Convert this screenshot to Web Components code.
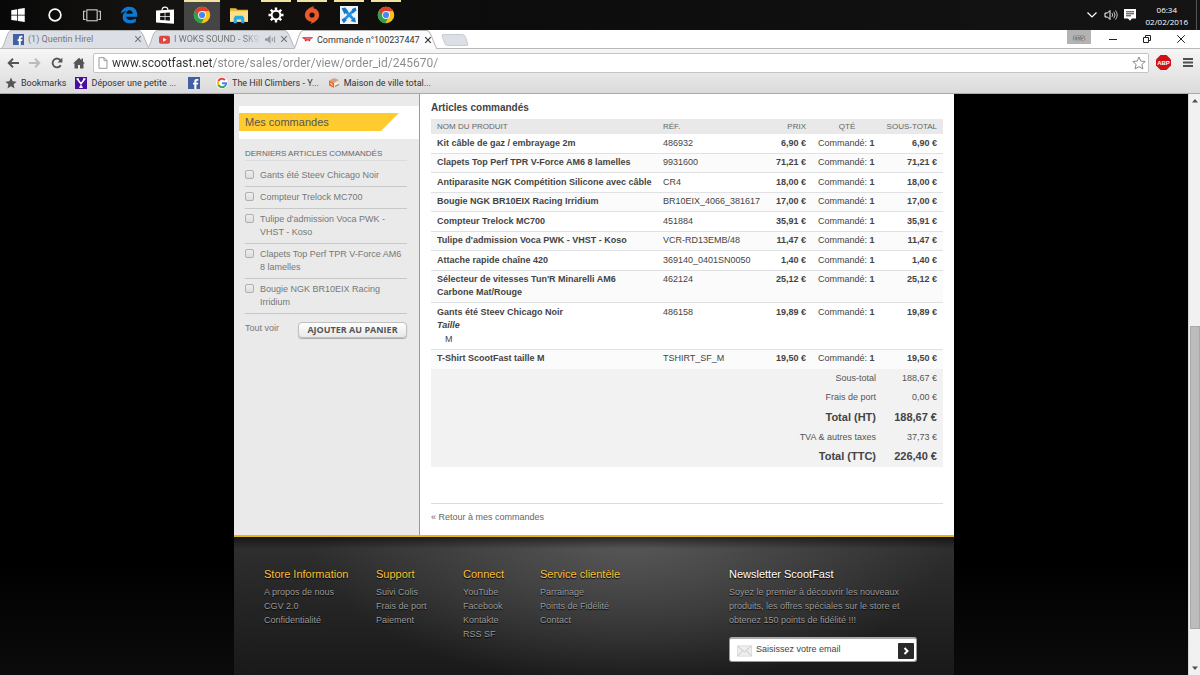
<!DOCTYPE html>
<html lang="fr">
<head>
<meta charset="utf-8">
<title>Commande n°100237447</title>
<style>
  html, body { margin: 0; height: 100%; }
  body { overflow: hidden; background: #000; font-family: "Liberation Sans", Arial, sans-serif; }
</style>
</head>
<body>
<desk-top></desk-top>
<script>
const define = (name, css, html, setup) => {
  const template = document.createElement('template');
  template.innerHTML = `<style>*{box-sizing:border-box}:host{box-sizing:border-box}${css}</style>${html}`;
  customElements.define(name, class extends HTMLElement {
    constructor() {
      super();
      this.attachShadow({ mode: 'open' }).append(template.content.cloneNode(true));
    }
    connectedCallback() { if (setup) setup(this, this.shadowRoot); }
  });
};

const chrome = `<circle cx="12" cy="12" r="11" fill="#fbc116"/>
  <path d="M2.500 6.500A11 11 0 0 0 11 23l5-8.500-4-2.500z" fill="#2da150"/>
  <path d="M2.500 6.500 8 15l4-8.500z" fill="#2da150"/><path d="M2.500 6.500A11 11 0 0 1 21.500 6.500H12L6.500 11z" fill="#e23e30"/>
  <circle cx="12" cy="12" r="5.300" fill="#f4f4f4"/><circle cx="12" cy="12" r="4.100" fill="#4a86ef"/>`;

/* name: [viewBox, shapes] */
const ICONS = {
  windows: ['0 0 24 24', '<path fill="#fff" d="M3 5.500 11 4.300v7.200H3zM12 4.100 21 2.800v8.700H12zM3 12.500h8v7.200L3 18.500zM12 12.500H21V21.200l-9-1.300z"/>'],
  cortana: ['0 0 24 24', '<circle cx="12" cy="12" r="7.800" fill="none" stroke="#fff" stroke-width="2.300"/>'],
  taskview: ['0 0 28 24', '<g fill="none" stroke="#ddd" stroke-width="1.600"><rect x="6" y="4" width="16" height="17"/><path d="M4 6H1v13h3M24 6h3v13h-3"/></g>'],
  edge: ['0 0 24 24', '<path fill="#0f78d4" d="M1 10.500C2 4.500 6.500 1 12.300 1 19 1 23 5.700 23 12v2.300H8.200c.3 3 2.700 4.300 5.800 4.300 2.700 0 5-.7 7-1.900v4.700c-2.200 1.200-4.800 1.700-7.500 1.700C7.300 23.100 3.600 19.700 3.600 14.500c0-3.600 2-6.500 5.400-8C5.800 6.700 3 8.200 1 10.500zM8.300 10.300h8.600c0-2.800-1.500-4.500-4.100-4.500-2.500 0-4.100 1.800-4.500 4.500z"/>'],
  store: ['0 0 24 24', '<path fill="none" stroke="#fff" stroke-width="1.500" d="M8 6c0-6 8-6 8 0"/><path fill="#fff" d="M0 6l24-1.500v19L0 22z"/><path fill="#151515" d="M5.500 9.500l6-.4v4.200h-6zM12.500 9l6-.5v4.800h-6zM5.500 14.300h6v4.600l-6-.4zM12.500 14.300h6v5.200l-6-.5z"/>'],
  chrome: ['0 0 24 24', chrome],
  folder: ['0 0 24 24', '<path fill="#e9b93d" d="M0 3h8l2 2h14v16H0z"/><path fill="#fbe08a" d="M0 7h24v14H0z"/><path fill="#27a9e8" d="M5 23v-7l2-3h10l2 3v7h-4v-5H9v5z"/>'],
  gear: ['0 0 24 24', '<circle cx="12" cy="12" r="5.800" fill="none" stroke="#fff" stroke-width="2.600"/><g stroke="#fff" stroke-width="3.200"><path d="M12 2v4M12 18v4M2 12h4M18 12h4M5 5l2.600 2.600M16.400 16.400 19 19M5 19l2.600-2.600M16.400 7.600 19 5"/></g>'],
  origin: ['0 0 24 24', '<path fill="#e8592b" d="M15 0c-1 1.500-1.300 2.500-1.300 3.100C18.500 3.500 21.500 7.500 21.500 12c0 5.500-5 9.500-11.500 12 1-1.500 1.300-2.300 1.300-3.100C6 20.500 2.500 16.700 2.500 12 2.500 6 8 2 15 0z"/><circle cx="12" cy="12" r="3.400" fill="#15100e"/>'],
  tools: ['0 0 24 24', '<rect width="24" height="24" fill="#eef4f8"/><path d="M4 20 20 4M6 5l13 14" stroke="#2492de" stroke-width="3.600"/><path d="M2 3l5-1 4 5-5 4zM14 20l7 2-1-7zM16 4l5-2 1 4-5 4zM2 18l4-2 3 3-4 4z" fill="#1878c8"/>'],
  chevron: ['0 0 12 12', '<path d="M1.500 3.500 6 8l4.500-4.500" fill="none" stroke="#fff" stroke-width="1.200"/>'],
  speaker: ['0 0 14 12', '<path d="M1 4h2.500L6 1.500v9L3.500 8H1z" fill="none" stroke="#fff"/><path d="M8 4.200q1.500 1.800 0 3.600M9.800 2.800q2.400 3.200 0 6.400M11.500 1.500q3.400 4.500 0 9" fill="none" stroke="#ddd" stroke-width=".9"/>'],
  note: ['0 0 12 12', '<path d="M0 0h12v9.500H8L6 11.700 4 9.500H0z" fill="#fff"/><path d="M2 2.800h8M2 4.800h8M2 6.800h5" stroke="#222" stroke-width=".9"/>'],
  facebook: ['0 0 12 12', '<rect width="12" height="12" fill="#4260a4"/><path fill="#fff" d="M6.300 12V7.500H5V5.700h1.300V4.500C6.300 2.800 7.200 2 8.800 2H10.300v1.800H9.300c-.7 0-.9.300-.9.900v1h1.900L10 7.500H8.400V12z"/>'],
  youtube: ['0 0 12 10', '<rect y="1" width="12" height="8.500" rx="2" fill="#e04640"/><path d="M4.500 3.200 8.300 5.300 4.500 7.400z" fill="#fff"/>'],
  scoot: ['0 0 12 6', '<path d="M0 .5h12l-1 1.500-1.500.3L8.700 5h-1L7.200 4H5L4.500 5h-1L2.600 2.400 1 2z" fill="#e2202a"/><path d="M3.500 2.300h5.500" stroke="#fff" stroke-width=".6"/>'],
  close: ['0 0 8 8', '<path d="M1.200 1.200 6.800 6.800M6.800 1.200 1.200 6.800" stroke="currentColor" stroke-width="1.200"/>'],
  sound: ['0 0 9 8', '<path d="M0 3h2l2.500-2.500v7L2 5H0z" fill="#999"/><path d="M6 2.500v3M7.800 1.500v5" stroke="#999" stroke-width=".9"/>'],
  back: ['0 0 12 10', '<path d="M6 .8 1.700 5 6 9.200M2 5h10" fill="none" stroke="currentColor" stroke-width="1.900"/>'],
  forward: ['0 0 12 10', '<path d="M6 .8 10.300 5 6 9.200M10 5H0" fill="none" stroke="currentColor" stroke-width="1.900"/>'],
  reload: ['0 0 12 12', '<path d="M9.800 8.200A4.400 4.400 0 1 1 9.500 3.300" fill="none" stroke="#555" stroke-width="1.900"/><path d="M11.400.6v5H6.600z" fill="#555"/>'],
  home: ['0 0 12 12', '<path d="M6 .8 0 6.500h1.500V11.500H5V8h2v3.500h3.500v-5H12L10 4.600V1.500H8.500v1.700z" fill="#555"/>'],
  page: ['0 0 10 12', '<path d="M1 .7h5.200L9 3.500v7.800H1z" fill="#fff" stroke="#999"/><path d="M6 .7v3h3" fill="none" stroke="#999"/>'],
  star: ['0 0 14 14', '<path d="M7 1l1.800 4.100 4.400.4-3.300 3 1 4.400L7 10.600l-3.900 2.300 1-4.400-3.300-3 4.400-.4z" fill="#fff" stroke="#888"/>'],
  starfull: ['0 0 14 14', '<path d="M7 .7l1.900 4.400 4.700.4-3.500 3.100 1 4.700L7 10.900l-4.100 2.400 1-4.700L.4 5.500l4.700-.4z" fill="#555"/>'],
  abp: ['0 0 15 15', '<path d="M4.500 0h6L15 4.500v6L10.500 15h-6L0 10.500v-6z" fill="#d41017"/><text x="7.500" y="9.900" text-anchor="middle" font-family="Liberation Sans" font-weight="bold" font-size="6" fill="#fff">ABP</text>'],
  menu: ['0 0 10 10', '<path d="M0 1.500h10M0 5h10M0 8.500h10" stroke="#505050" stroke-width="2"/>'],
  yahoo: ['0 0 12 12', '<rect width="12" height="12" fill="#4a0fa0"/><path d="M2.300 2 6 6.800 9.700 2M6 6.500V10.500M4.300 10.300h3.400M1.500 2H4M8 2h2.500" fill="none" stroke="#fff" stroke-width="1.500"/>'],
  google: ['0 0 12 12', '<circle cx="6" cy="6" r="6" fill="#fff"/><g fill="none" stroke-width="2"><path d="M9 3A4.200 4.200 0 0 0 2.400 3.900" stroke="#ea4335"/><path d="M2.400 3.900a4.200 4.200 0 0 0 0 4.200" stroke="#fbbc05"/><path d="M2.400 8.100a4.200 4.200 0 0 0 6.300 1.100" stroke="#34a853"/><path d="M8.700 9.200A4.200 4.200 0 0 0 10.200 6.200H6" stroke="#4285f4"/></g>'],
  box: ['0 0 12 12', '<path d="M6 1l5 2v5.500L6.500 11 1 8.500V3.500z" fill="#e9ddd3"/><path d="M1 3.500l5 2.300V11L1 8.500z" fill="#e86a2c"/><path d="M1 3.500 6 1l5 2-5 2.800z" fill="#c9a58c"/><path d="M2.500 6l2 2.500M6.500 7l3.500-1" stroke="#fff"/><path d="M7 9.500l4-2" stroke="#777"/>'],
  minimize: ['0 0 10 10', '<path d="M1 5.500h8" stroke="#222"/>'],
  restore: ['0 0 10 10', '<path d="M1.500 3.500h5v5h-5zM3.500 3.500v-2h5v5h-2" fill="none" stroke="#222"/>'],
  shut: ['0 0 10 10', '<path d="M1.200 1.200 8.800 8.800M8.800 1.200 1.200 8.800" stroke="#222"/>'],
  mail: ['0 0 16 12', '<rect x=".5" y=".5" width="15" height="11" fill="#eee" stroke="#ddd"/><path d="M1 1l7 6 7-6M1 11l5-5.500M15 11l-5-5.500" fill="none" stroke="#c4c4c4"/>'],
  go: ['0 0 8 8', '<path d="M2.500 1 5.500 4 2.500 7" fill="none" stroke="#fff" stroke-width="2"/>'],
  up: ['0 0 6 4', '<path d="M3 0l3 3.500H0z" fill="#505050"/>'],
  down: ['0 0 6 4', '<path d="M3 4 6 .5H0z" fill="#505050"/>'],
};

define('app-icon', `:host{display:inline-block;flex:none;width:12px;height:12px}svg{display:block;width:100%;height:100%}`,
  `<svg aria-hidden="true"></svg>`, (el, root) => {
    const [box, shapes] = ICONS[el.getAttribute('name')];
    const svg = root.querySelector('svg');
    svg.setAttribute('viewBox', box);
    svg.innerHTML = shapes;
  });

/* ---------- Windows taskbar ---------- */
define('task-button', `
  :host{flex:1;display:flex}
  :host([running]){background:linear-gradient(#f3e3a0,#f3e3a0) 50% 0/30px 2px no-repeat}
  :host([active]){background:linear-gradient(#f3e3a0 2px,#454545 2px)}
  button{flex:1;display:flex;align-items:center;justify-content:center;border:0;padding:0;background:none}
  ::slotted(app-icon){width:18px;height:18px}`,
  `<button type="button"><slot></slot></button>`, (el, root) =>
    root.querySelector('button').setAttribute('aria-label', el.getAttribute('label')));

define('task-bar', `
  :host{display:flex;height:30px;background:linear-gradient(90deg,#080808,#151311 12%,#0c0c0c 40%,#141414);color:#fff;justify-content:space-between;font-family:"Open Sans",sans-serif}
  nav{display:flex;width:404px}
  .tray{display:flex;align-items:center;gap:6px;padding-right:3px}
  .clock{font-size:8px;line-height:13px;text-align:center;margin:0 2px 0 4px}
  .clock div{height:12px}
  .edge{width:1px;height:30px;background:#555}
  .small{width:12px;height:12px}
  .wide{width:14px}`,
  `<nav>
    <task-button label="Démarrer"><app-icon name="windows"></app-icon></task-button>
    <task-button label="Cortana"><app-icon name="cortana"></app-icon></task-button>
    <task-button label="Vue des tâches"><app-icon name="taskview"></app-icon></task-button>
    <task-button label="Edge"><app-icon name="edge"></app-icon></task-button>
    <task-button label="Store"><app-icon name="store"></app-icon></task-button>
    <task-button label="Chrome" active><app-icon name="chrome"></app-icon></task-button>
    <task-button label="Explorateur"><app-icon name="folder"></app-icon></task-button>
    <task-button label="Paramètres" running><app-icon name="gear"></app-icon></task-button>
    <task-button label="Origin" running><app-icon name="origin"></app-icon></task-button>
    <task-button label="Outils" running><app-icon name="tools"></app-icon></task-button>
    <task-button label="Chrome" running><app-icon name="chrome"></app-icon></task-button>
  </nav>
  <div class="tray">
    <app-icon name="chevron" class="small"></app-icon>
    <app-icon name="speaker" class="wide"></app-icon>
    <app-icon name="note" class="small"></app-icon>
    <div class="clock"><div>06:34</div><div>02/02/2016</div></div>
    <span class="edge"></span>
  </div>`);

/* ---------- Browser window ---------- */
define('browser-tab', `
  :host{display:flex;position:relative;width:149px;height:18px;margin-right:-3px;padding:0 8px 0 12px;align-items:center;gap:4px;color:#777}
  :host([active]){color:#333;z-index:1;height:19px;width:145px;padding:0 6px 0 9px}
  .shape{position:absolute;inset:0;width:100%;height:100%}
  .shape path{fill:#dce0e6;stroke:#b4b4b4}
  :host([active]) .shape path{fill:#fbfbfb}
  a{position:relative;flex:1;min-width:0;overflow:hidden;white-space:nowrap;color:inherit;text-decoration:none;font-size:9px;line-height:14px}
  :host([fade]) a{-webkit-mask-image:linear-gradient(90deg,#000 80%,transparent)}
  ::slotted(app-icon){position:relative;width:11px;height:11px}
  button{position:relative;border:0;background:none;padding:0;display:flex;color:inherit}
  button app-icon{width:8px;height:8px}`,
  `<svg class="shape" viewBox="0 0 149 18" preserveAspectRatio="none" aria-hidden="true"><path d="M0 18.500C4 17 5 1.500 10 .5H138C143 1.500 145 17 149 18.500"/></svg>
   <slot name="icon"></slot><a href="#"><slot></slot></a><slot name="sound"></slot>
   <button type="button" aria-label="Fermer l'onglet"><app-icon name="close"></app-icon></button>`);

define('tab-strip', `
  :host{display:flex;height:19px;background:#fff;border-bottom:1px solid #b8b8b8;padding-left:1px;justify-content:space-between;font-family:Roboto,sans-serif}
  .tabs{display:flex;align-items:flex-start}
  .new{width:24px;height:12px;margin:4px 0 0 8px;padding:0;border:1px solid #c8ccd0;border-radius:3px;background:#dce0e6;transform:skewX(20deg)}
  .window{display:flex;align-items:center;padding-right:14px;gap:24px}
  .window button{border:0;padding:0;background:none;display:flex}
  .window app-icon{width:10px;height:10px}
  .window .user{align-self:flex-start;width:24px;height:14px;margin-right:-7px;background:#b3b3b3;color:#eee;font:8px/13px "Open Sans",sans-serif;justify-content:center;text-shadow:0 0 1px #222,0 0 1px #222,0 0 1px #222}`,
  `<div class="tabs">
    <browser-tab><app-icon slot="icon" name="facebook"></app-icon>(1) Quentin Hirel</browser-tab>
    <browser-tab fade><app-icon slot="icon" name="youtube"></app-icon>I WOKS SOUND - SK93<app-icon slot="sound" name="sound"></app-icon></browser-tab>
    <browser-tab active><app-icon slot="icon" name="scoot"></app-icon>Commande n°100237447</browser-tab>
    <button class="new" type="button" aria-label="Nouvel onglet"></button>
  </div>
  <div class="window">
    <button class="user" type="button">ms</button>
    <button type="button" aria-label="Réduire"><app-icon name="minimize"></app-icon></button>
    <button type="button" aria-label="Restaurer"><app-icon name="restore"></app-icon></button>
    <button type="button" aria-label="Fermer"><app-icon name="shut"></app-icon></button>
  </div>`);

define('address-bar', `
  :host{display:flex;height:25px;align-items:center;gap:10px;padding:2px 7px 0;font-family:Roboto,sans-serif}
  button{display:flex;border:0;background:none;padding:0;color:#555}
  button[disabled]{color:#bbb}
  .field{flex:1;display:flex;align-items:center;gap:4px;height:20px;margin-left:-2px;padding:0 2px 0 4px;background:#fff;border:1px solid #c4c4c4;border-radius:2px}
  .field app-icon{width:10px}
  .field .star{width:14px;height:14px}
  input{flex:1;min-width:0;border:0;outline:0;padding:0;height:18px;font:12px/18px Roboto,sans-serif;
    background:linear-gradient(90deg,#333 var(--host-width),#8a8a8a var(--host-width));-webkit-background-clip:text;background-clip:text;-webkit-text-fill-color:transparent}
  .extra{display:flex;align-items:center;gap:12px;margin-left:-3px}
  .abp{width:15px;height:15px}
  .menu{width:10px;height:11px}`,
  `<button type="button" aria-label="Précédent"><app-icon name="back"></app-icon></button>
   <button type="button" aria-label="Suivant" disabled><app-icon name="forward"></app-icon></button>
   <button type="button" aria-label="Actualiser"><app-icon name="reload"></app-icon></button>
   <button type="button" aria-label="Accueil"><app-icon name="home"></app-icon></button>
   <div class="field"><app-icon name="page"></app-icon>
     <input type="text" aria-label="Adresse" value="www.scootfast.net/store/sales/order/view/order_id/245670/">
     <button type="button" aria-label="Favori"><app-icon name="star" class="star"></app-icon></button></div>
   <div class="extra">
     <button type="button" aria-label="Adblock Plus"><app-icon name="abp" class="abp"></app-icon></button>
     <button type="button" aria-label="Menu"><app-icon name="menu" class="menu"></app-icon></button>
   </div>`, (el, root) => {
    /* the host name is dark, the path grey */
    const input = root.querySelector('input');
    const pen = document.createElement('canvas').getContext('2d');
    pen.font = '12px Roboto, sans-serif';
    input.style.setProperty('--host-width', Math.round(pen.measureText(input.value.split('/')[0]).width) + 'px');
  });

define('bookmark-bar', `
  :host{display:flex;height:20px;align-items:center;gap:9px;padding:0 5px 2px;border-bottom:1px solid #aaa;font-family:Roboto,sans-serif}
  a{display:flex;align-items:center;gap:4px;color:#333;text-decoration:none;font-size:9px;line-height:14px;white-space:nowrap}
  .lone{margin:0 7px 0 3px}`,
  `<a href="#"><app-icon name="starfull"></app-icon>Bookmarks</a>
   <a href="#"><app-icon name="yahoo"></app-icon>Déposer une petite ...</a>
   <a href="#" class="lone" aria-label="Facebook"><app-icon name="facebook"></app-icon></a>
   <a href="#"><app-icon name="google"></app-icon>The Hill Climbers - Y...</a>
   <a href="#"><app-icon name="box"></app-icon>Maison de ville total...</a>`);

define('scroll-track', `
  :host{display:flex;flex-direction:column;align-items:center;width:12px;background:#f1f1f1;border-left:1px solid #d8d8d8;padding:5px 0}
  app-icon{width:6px;height:4px}
  .before{flex:220}.after{flex:37}
  .thumb{flex:297;width:10px;background:#bcbcbc;border:1px solid #a8a8a8}`,
  `<app-icon name="up"></app-icon><div class="before"></div><div class="thumb"></div><div class="after"></div><app-icon name="down"></app-icon>`);

/* ---------- Shop page ---------- */
define('reorder-list', `
  :host{display:block;width:185px;background:#eaeaea;padding:12px 0 0 5px;color:#777;font-size:9px;line-height:13px}
  .title{background:#fff;padding:7px 0 8px}
  h2{margin:0;width:160px;height:18px;padding-left:6px;background:#ffcb2e;clip-path:polygon(0 0,100% 0,142px 100%,0 100%);font-size:11px;line-height:18px;font-weight:normal;color:#555}
  .body{padding:9px 12px 0 6px}
  h3{margin:0;height:13px;padding-bottom:1px;font-size:8px;line-height:12px;font-weight:normal;color:#666;border-bottom:1px solid #dcdcdc;white-space:nowrap}
  ul{list-style:none;margin:0;padding:4px 0 0}
  li{display:flex;gap:6px;padding:4px 0;border-bottom:1px solid #c8c8c8}
  input{appearance:none;flex:none;width:9px;height:9px;margin:1px 0 0;border:1px solid #b0b0b0;border-radius:2px;background:linear-gradient(#eee,#ddd)}
  .actions{display:flex;justify-content:space-between;padding-top:8px}
  a{color:inherit;text-decoration:none}
  button{width:109px;height:16px;padding:0 0 1px;border:1px solid #c0c0c0;border-radius:4px;background:linear-gradient(#fff,#e8e8e8);box-shadow:0 1px 1px #aaa;font:bold 9px/12px "Open Sans",sans-serif;color:#555}`,
  `<div class="title"><h2>Mes commandes</h2></div>
   <div class="body">
    <h3>DERNIERS ARTICLES COMMANDÉS</h3>
    <ul>
      <li><input type="checkbox" id="a"><label for="a">Gants été Steev Chicago Noir</label></li>
      <li><input type="checkbox" id="b"><label for="b">Compteur Trelock MC700</label></li>
      <li><input type="checkbox" id="c"><label for="c">Tulipe d'admission Voca PWK - VHST - Koso</label></li>
      <li><input type="checkbox" id="d"><label for="d">Clapets Top Perf TPR V-Force AM6 8 lamelles</label></li>
      <li><input type="checkbox" id="e"><label for="e">Bougie NGK BR10EIX Racing Irridium</label></li>
    </ul>
    <div class="actions"><a href="#">Tout voir</a><button type="button">AJOUTER AU PANIER</button></div>
   </div>`);

const items = [
  ['Kit câble de gaz / embrayage 2m', '486932', '6,90 €'],
  ['Clapets Top Perf TPR V-Force AM6 8 lamelles', '9931600', '71,21 €'],
  ['Antiparasite NGK Compétition Silicone avec câble', 'CR4', '18,00 €'],
  ['Bougie NGK BR10EIX Racing Irridium', 'BR10EIX_4066_381617', '17,00 €'],
  ['Compteur Trelock MC700', '451884', '35,91 €'],
  ["Tulipe d'admission Voca PWK - VHST - Koso", 'VCR-RD13EMB/48', '11,47 €'],
  ['Attache rapide chaîne 420', '369140_0401SN0050', '1,40 €'],
  ["Sélecteur de vitesses Tun'R Minarelli AM6 Carbone Mat/Rouge", '462124', '25,12 €'],
  ['Gants été Steev Chicago Noir', '486158', '19,89 €', ['Taille', 'M']],
  ['T-Shirt ScootFast taille M', 'TSHIRT_SF_M', '19,50 €'],
];
const itemRow = ([name, ref, price, option]) => `<tr>
  <th scope="row">${name}${option ? `<dl><dt>${option[0]}</dt><dd>${option[1]}</dd></dl>` : ''}</th>
  <td>${ref}</td><td class="num"><b>${price}</b></td><td class="qty">Commandé: <b>1</b></td><td class="num"><b>${price}</b></td></tr>`;

define('order-table', `
  :host{display:block;color:#444}
  table{width:100%;border-collapse:separate;border-spacing:0;table-layout:fixed;font-size:9px;line-height:13px}
  .name{width:226px}.ref{width:112px}.price{width:43px}.count{width:70px}
  th,td{padding:0 6px;text-align:left;vertical-align:top}
  thead th{background:#e9e9e9;font-weight:normal;font-size:8px;line-height:15px;color:#666;white-space:nowrap}
  thead th:last-child{padding-left:0}
  tbody th,tbody td{padding-top:3px;padding-bottom:3px;border-bottom:1px solid #dfe1e5;white-space:nowrap}
  tbody th{white-space:normal;padding-right:4px}
  tbody tr:nth-child(even)>*{padding-top:2px;background:#fbfbfb}
  tbody tr:last-child>*{padding-bottom:4px;border:0}
  .num{text-align:right}
  td.qty{padding-right:0}
  thead .qty{text-align:center}
  dl{margin:0}dt{font-style:italic}dd{margin:0 0 0 8px;font-weight:normal;line-height:14px}
  tfoot th,tfoot td{background:#f2f2f2;text-align:right;font-weight:normal;line-height:19px;color:#555}
  tfoot .tax>*{line-height:18px}
  tfoot .total>*{font-size:11px;line-height:21px;font-weight:bold;color:#444}
  tfoot td{padding-left:0}`,
  `<table>
    <colgroup><col class="name"><col class="ref"><col class="price"><col class="count"><col></colgroup>
    <thead><tr><th>NOM DU PRODUIT</th><th>RÉF.</th><th class="num">PRIX</th><th class="qty">QTÉ</th><th class="num">SOUS-TOTAL</th></tr></thead>
    <tbody>${items.map(itemRow).join('')}</tbody>
    <tfoot>
      <tr><th colspan="4">Sous-total</th><td>188,67 €</td></tr>
      <tr><th colspan="4">Frais de port</th><td>0,00 €</td></tr>
      <tr class="total"><th colspan="4">Total (HT)</th><td>188,67 €</td></tr>
      <tr class="tax"><th colspan="4">TVA &amp; autres taxes</th><td>37,73 €</td></tr>
      <tr class="total"><th colspan="4">Total (TTC)</th><td>226,40 €</td></tr>
    </tfoot>
  </table>`);

define('link-column', `
  :host{display:block}
  h4{margin:0 0 4px;font-size:11px;line-height:14px;font-weight:normal;color:#fdc02f;text-shadow:0 1px 1px #000;white-space:nowrap}
  ::slotted(a){display:block;color:#9a9a9a;text-decoration:none;font-size:9px;line-height:14px;text-shadow:0 1px 1px #000;white-space:nowrap}`,
  `<h4></h4><slot></slot>`, (el, root) => root.querySelector('h4').textContent = el.getAttribute('heading'));

define('news-letter', `
  :host{display:block}
  h4{margin:0 0 4px;font-size:11px;line-height:14px;font-weight:normal;color:#fff;text-shadow:0 1px 1px #000}
  p{margin:0 0 10px;font-size:9px;line-height:14px;color:#9a9a9a;text-shadow:0 1px 1px #000}
  form{display:flex;align-items:center;width:188px;height:25px;padding:1px 2px 0 7px;gap:4px;background:#fff;border:1px solid #999;border-top:2px solid #aaa;border-radius:3px}
  form app-icon.mail{width:15px;height:12px}
  input{flex:1;min-width:0;height:18px;padding:0 0 3px;border:0;outline:0;font:9px/14px "Liberation Sans",Arial,sans-serif}
  input::placeholder{color:#444;opacity:1}
  button{display:flex;align-items:center;justify-content:center;width:16px;height:16px;padding:0;border:0;border-radius:1px;background:#2a2a2a}
  button app-icon{width:8px;height:8px}`,
  `<h4>Newsletter ScootFast</h4>
   <p>Soyez le premier à découvrir les nouveaux produits, les offres spéciales sur le store et obtenez 150 points de fidélité !!!</p>
   <form><app-icon name="mail" class="mail"></app-icon><input type="email" aria-label="Email" placeholder="Saisissez votre email">
   <button type="button" aria-label="S'inscrire"><app-icon name="go"></app-icon></button></form>`);

define('shop-footer', `
  :host{display:grid;flex:1;grid-template-columns:112px 87px 77px 189px 1fr;padding:30px 37px 12px 30px;border-top:2px solid #e5b520;
    background:linear-gradient(#0008,#0000 12px),radial-gradient(ellipse 320px 150px at 55% 0,#585858,#0000),linear-gradient(#303030,#191919)}`,
  `<link-column heading="Store Information"><a href="#">A propos de nous</a><a href="#">CGV 2.0</a><a href="#">Confidentialité</a></link-column>
   <link-column heading="Support"><a href="#">Suivi Colis</a><a href="#">Frais de port</a><a href="#">Paiement</a></link-column>
   <link-column heading="Connect"><a href="#">YouTube</a><a href="#">Facebook</a><a href="#">Kontakte</a><a href="#">RSS SF</a></link-column>
   <link-column heading="Service clientèle"><a href="#">Parrainage</a><a href="#">Points de Fidélité</a><a href="#">Contact</a></link-column>
   <news-letter></news-letter>`);

define('shop-page', `
  :host{display:flex;flex-direction:column;width:100%;max-width:720px;margin:0 auto;background:#fff}
  .columns{display:flex}
  main{flex:1;padding:7px 11px 11px;border-left:1px solid #999}
  h2{margin:0 0 4px;font-size:10px;line-height:14px;color:#444}
  .back{margin-top:36px;padding-top:6px;border-top:1px solid #dcdcdc;font-size:9px;line-height:14px}
  .back a{color:#666;text-decoration:none}`,
  `<div class="columns"><reorder-list></reorder-list>
    <main><h2>Articles commandés</h2><order-table></order-table><div class="back"><a href="#">« Retour à mes commandes</a></div></main></div>
   <shop-footer></shop-footer>`);

define('desk-top', `
  :host{display:flex;flex-direction:column;height:100vh}
  .bars{background:linear-gradient(#f6f6f6,#dadada)}
  .view{flex:1;min-height:0;display:flex;background:linear-gradient(#000 80%,#0b0b0b)}
  .page{flex:1;display:flex;overflow:hidden}`,
  `<task-bar></task-bar><tab-strip></tab-strip>
   <div class="bars"><address-bar></address-bar><bookmark-bar></bookmark-bar></div>
   <div class="view"><div class="page"><shop-page></shop-page></div><scroll-track></scroll-track></div>`);
</script>
</body>
</html>
